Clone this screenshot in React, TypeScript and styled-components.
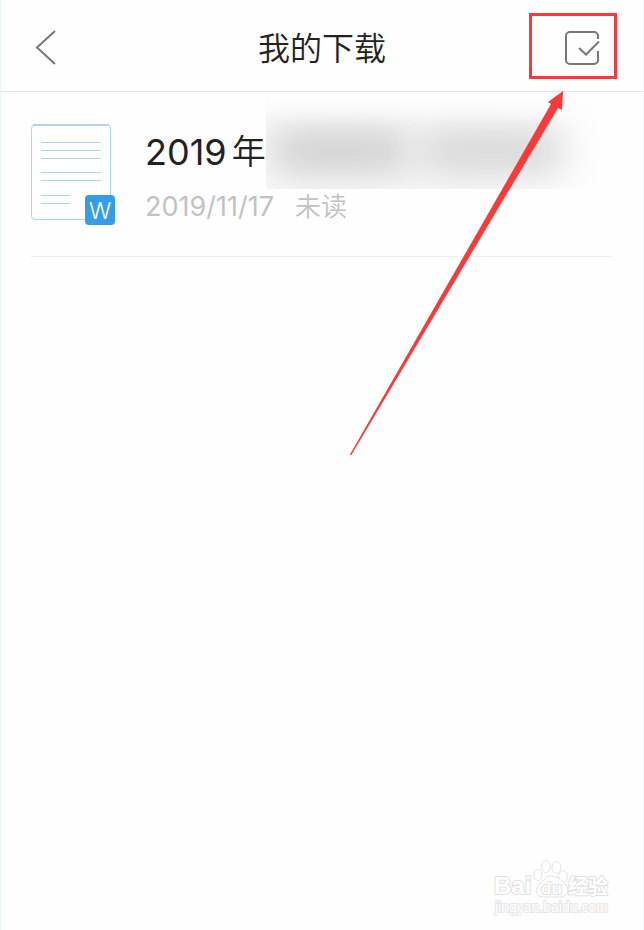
import React from "react";
import styled, { createGlobalStyle } from "styled-components";

const GlobalStyle = createGlobalStyle`
  *, *::before, *::after { box-sizing: border-box; }
  body {
    margin: 0;
    background: #fefefe;
    color: #222;
    font-family: Inter, "Noto Sans CJK SC", sans-serif;
  }
`;

const Page = styled.div`
  position: relative;
  display: flex;
  flex-direction: column;
  min-height: 100vh;
  border-left: 1px solid #edf2fd;
  border-right: 1px solid #f0f1fa;
  overflow: hidden;
`;

const Header = styled.header`
  display: grid;
  grid-template-columns: 88px 1fr 88px;
  align-items: center;
  height: 92px;
  padding: 0 26px;
  border-bottom: 1px solid #e4e4e4;
`;

const Title = styled.h1`
  margin: 0;
  padding-top: 6px;
  text-align: center;
  font-size: 32px;
  line-height: 44px;
  font-weight: 350;
`;

const IconButton = styled.button<{ $marked?: boolean }>`
  display: flex;
  align-items: center;
  justify-content: ${(p) => (p.$marked ? "flex-end" : "flex-start")};
  width: 88px;
  height: 66px;
  padding: ${(p) => (p.$marked ? "6px 14px 0 0" : "4px 0 0 8px")};
  border: ${(p) => (p.$marked ? "3px solid #fb3939" : "0")};
  background: none;
  cursor: pointer;
`;

const List = styled.ul`
  margin: 0;
  padding: 0 30px;
  list-style: none;
`;

const Item = styled.li`
  display: flex;
  gap: 30px;
  height: 165px;
  padding-top: 32px;
  border-bottom: 1px solid #eee;
`;

const FileIcon = styled.svg`
  flex: none;
  width: 84px;
  height: 101px;
`;

const Details = styled.div`
  flex: 1;
  min-width: 0;
`;

const Name = styled.h2`
  position: relative;
  display: flex;
  align-items: center;
  gap: 5px;
  margin: 0;
  height: 56px;
  font-size: 36px;
  line-height: 56px;
  font-weight: 400;
`;

const Year = styled.span`
  font-size: 34px;
  font-weight: 350;
`;

const Redaction = styled.span`
  position: absolute;
  left: 121px;
  right: 12px;
  top: -28px;
  height: 93px;
  overflow: hidden;
  background: linear-gradient(90deg, #f8f8f8, #f9f9f9 70%, #fefefe);
  mask-image: linear-gradient(#0000, #000 30%);

  &::before, &::after {
    content: "";
    position: absolute;
    top: 33px;
    height: 44px;
    border-radius: 20px;
    filter: blur(18px);
  }
  &::before { left: 4px; width: 140px; background: #cfcfcf; }
  &::after { left: 152px; right: 38px; background: #d6d6d6; }
`;

const Meta = styled.p`
  display: flex;
  align-items: center;
  gap: 21px;
  margin: 8px 0 0;
  color: #c2c2c2;
  font-size: 27px;
  line-height: 38px;
  font-weight: 400;
`;

const Status = styled.span`
  font-size: 26px;
  font-weight: 350;
`;

const Arrow = styled.svg`
  position: absolute;
  top: 90px;
  right: 77px;
  width: 216px;
  height: 366px;
  pointer-events: none;
`;

const Watermark = styled.svg`
  align-self: flex-end;
  margin: auto 30px 12px 0;
  width: 124px;
  height: 60px;
`;

export default function App() {
  return (
    <>
      <GlobalStyle />
      <Page>
        <Header>
          <IconButton aria-label="返回">
            <svg width="24" height="36" fill="none" stroke="#777" strokeWidth="2">
              <path d="M20 1 2 17.5 20 34" />
            </svg>
          </IconButton>
          <Title>我的下载</Title>
          <IconButton $marked aria-label="选择">
            <svg width="35" height="36" fill="none" stroke="#777" strokeWidth="2">
              <path d="M33 8V5a4 4 0 0 0-4-4H5a4 4 0 0 0-4 4v24a4 4 0 0 0 4 4h24a4 4 0 0 0 4-4v-9M14 17l7 6.500 13-13" />
            </svg>
          </IconButton>
        </Header>
        <main>
          <List>
            <Item>
              <FileIcon viewBox="0 0 84 101" aria-hidden="true">
                <rect x=".5" y="1" width="79" height="94.5" rx="3.5" fill="#fff" stroke="#a9d7f3" />
                <path d="M2 1h76" stroke="#a9d7f3" strokeWidth="2" />
                <path
                  d="M10 18.5h60M10 26.5h60M10 34.5h60M10 48.5h60M10 56.5h60M10 71.5h29M10 79.5h29"
                  stroke="#a9d7f3"
                />
                <rect x="54" y="71" width="30" height="30" rx="4" fill="#359de6" />
                <text
                  x="69"
                  y="95"
                  textAnchor="middle"
                  fill="#fff"
                  fontFamily="Inter, sans-serif"
                  fontSize="23"
                  fontWeight="300"
                >
                  W
                </text>
              </FileIcon>
              <Details>
                <Name>
                  2019<Year>年</Year>
                  <Redaction />
                </Name>
                <Meta>
                  <time dateTime="2019-11-17">2019/11/17</time>
                  <Status>未读</Status>
                </Meta>
              </Details>
            </Item>
          </List>
        </main>
        <Watermark viewBox="0 0 124 60" role="img" aria-label="Baidu 经验 jingyan.baidu.com">
          <g fill="#fff" stroke="#e2e2e2">
            <ellipse cx="49" cy="17" rx="4" ry="5.5" />
            <ellipse cx="57" cy="8.500" rx="4.500" ry="6" />
            <ellipse cx="67.500" cy="9.500" rx="4.500" ry="6" />
            <ellipse cx="74" cy="18.500" rx="4.500" ry="5.500" />
            <path d="M62 18c-5 0-7 4-11 8-6 5-5 12 2 13h19c7-1 9-8 4-13-4-4-8-8-14-8Z" />
          </g>
          <g
            fill="#fff"
            stroke="#e0e0e0"
            strokeWidth="2"
            paintOrder="stroke"
            strokeLinejoin="round"
            fontFamily='"Liberation Sans", "Noto Sans CJK SC", sans-serif'
            fontWeight="700"
          >
            <text x="5" y="36" fontSize="24">Bai</text>
            <text x="52" y="36" fontSize="17">du</text>
            <text x="79" y="36" fontSize="20">经验</text>
            <text x="6" y="54" fontSize="14" stroke="#e6e6e6" fontWeight="400">
              jingyan.baidu.com
            </text>
          </g>
        </Watermark>
        <Arrow viewBox="0 0 216 366" aria-hidden="true">
          <path d="M213 1 198 12l3 2L0 364.500l1 1L208 18l4 2Z" fill="#fb3939" />
        </Arrow>
      </Page>
    </>
  );
}
